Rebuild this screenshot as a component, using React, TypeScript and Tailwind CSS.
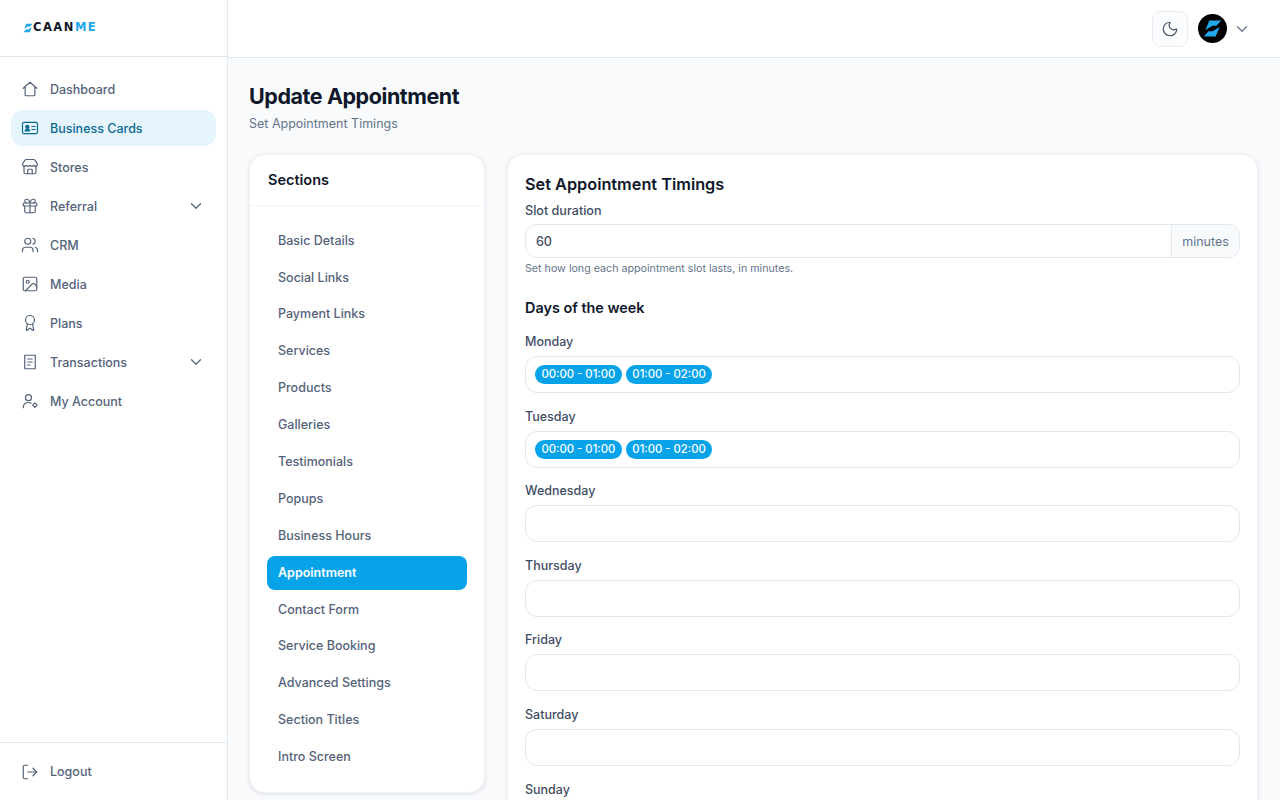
import { ChevronDown, Gift, Image, LogOut, Moon, Store, Users, Award } from 'lucide-react';
import type { ComponentType } from 'react';

type IconProps = { className?: string; strokeWidth?: number };

function HomeIcon({ className, strokeWidth }: IconProps) {
  return (
    <svg viewBox="0 0 24 24" className={className} fill="none" stroke="currentColor" strokeWidth={strokeWidth} strokeLinejoin="round" strokeLinecap="round">
      <path d="M3 11 12 3l9 8M5.5 9v11a1 1 0 0 0 1 1h11a1 1 0 0 0 1-1V9" />
    </svg>
  );
}

function CardIcon({ className, strokeWidth }: IconProps) {
  return (
    <svg viewBox="0 0 24 24" className={className} fill="none" stroke="currentColor" strokeWidth={strokeWidth} strokeLinejoin="round" strokeLinecap="round">
      <rect x="2" y="4.5" width="20" height="15" rx="2" />
      <circle cx="8.5" cy="10.5" r="2" fill="currentColor" />
      <path d="M5.5 16c.5-2 1.500-2.500 3-2.500s2.500.5 3 2.500z" fill="currentColor" />
      <path d="M14.500 10h4.500M14.500 14h4.500" />
    </svg>
  );
}

function ReceiptIcon({ className, strokeWidth }: IconProps) {
  return (
    <svg viewBox="0 0 24 24" className={className} fill="none" stroke="currentColor" strokeWidth={strokeWidth} strokeLinejoin="round" strokeLinecap="round">
      <path d="M5 3h14v18H5z" />
      <path d="M9 8h6M9 12h6M9 16h3" />
    </svg>
  );
}

function AccountIcon({ className, strokeWidth }: IconProps) {
  return (
    <svg viewBox="0 0 24 24" className={className} fill="none" stroke="currentColor" strokeWidth={strokeWidth} strokeLinejoin="round" strokeLinecap="round">
      <circle cx="10" cy="7.500" r="4" />
      <path d="M3 21c0-4.500 3-7 7-7 1.500 0 2.500.3 3.500.8" />
      <path d="M18.500 14.500 21.500 17.500 18.500 20.500 15.500 17.500z" />
    </svg>
  );
}

interface NavItem {
  label: string;
  icon: ComponentType<IconProps>;
  active?: boolean;
  caret?: boolean;
}

const navItems: NavItem[] = [
  { label: 'Dashboard', icon: HomeIcon },
  { label: 'Business Cards', icon: CardIcon, active: true },
  { label: 'Stores', icon: Store },
  { label: 'Referral', icon: Gift, caret: true },
  { label: 'CRM', icon: Users },
  { label: 'Media', icon: Image },
  { label: 'Plans', icon: Award },
  { label: 'Transactions', icon: ReceiptIcon, caret: true },
  { label: 'My Account', icon: AccountIcon },
];

const sections = [
  'Basic Details',
  'Social Links',
  'Payment Links',
  'Services',
  'Products',
  'Galleries',
  'Testimonials',
  'Popups',
  'Business Hours',
  'Appointment',
  'Contact Form',
  'Service Booking',
  'Advanced Settings',
  'Section Titles',
  'Intro Screen',
];

const days = [
  { name: 'Monday', slots: ['00:00 - 01:00', '01:00 - 02:00'] },
  { name: 'Tuesday', slots: ['00:00 - 01:00', '01:00 - 02:00'] },
  { name: 'Wednesday', slots: [] },
  { name: 'Thursday', slots: [] },
  { name: 'Friday', slots: [] },
  { name: 'Saturday', slots: [] },
  { name: 'Sunday', slots: [] },
];

function Bolt({ className }: { className: string }) {
  return (
    <svg viewBox="0 0 24 24" className={className} fill="#22a7e8">
      <path d="M8 2h15l-6 6.500h-5L3 14z" />
      <path d="M21 10 16 22H1l6-6.500h5z" />
    </svg>
  );
}

function Sidebar() {
  return (
    <aside className="flex h-full w-[228px] shrink-0 flex-col border-r border-slate-200 bg-white">
      <div className="flex h-[57px] shrink-0 items-center border-b border-slate-200 pl-[23px]">
        <Bolt className="h-[12px] w-[10px]" />
        <span className="font-['DejaVu_Sans',sans-serif] text-[11.5px] font-bold leading-none tracking-[1.5px] text-[#111827]">CAAN</span>
        <span className="font-['DejaVu_Sans',sans-serif] text-[11.5px] font-bold leading-none tracking-[1.5px] text-[#22a7e8]">ME</span>
      </div>
      <nav className="flex flex-1 flex-col gap-[3px] px-[11px] pt-[14px]">
        {navItems.map((item) => {
          const Icon = item.icon;
          return (
            <div
              key={item.label}
              className={`flex h-9 items-center rounded-xl pl-[10px] pr-[11px] text-[12.5px] font-medium ${
                item.active ? 'bg-[#e6f4fd] text-[#0b6a94]' : 'text-[#55637a]'
              }`}
            >
              <Icon className="mr-[11px] h-[18px] w-[18px]" strokeWidth={1.6} />
              <span className="flex-1 pt-[2px]">{item.label}</span>
              {item.caret && <ChevronDown className="h-[18px] w-[18px]" strokeWidth={1.6} />}
            </div>
          );
        })}
      </nav>
      <div className="flex h-[58px] shrink-0 items-center border-t border-slate-200 pl-[21px] text-[12.5px] font-medium text-[#55637a]">
        <LogOut className="mr-[11px] h-[18px] w-[18px]" strokeWidth={1.6} />
        <span className="pt-px">Logout</span>
      </div>
    </aside>
  );
}

function Header() {
  return (
    <header className="flex h-[58px] shrink-0 items-center justify-end border-b border-slate-200 bg-white pr-[29px]">
      <button className="flex h-[36px] w-[36px] items-center justify-center rounded-lg border border-[#e9edf2] bg-[#fbfcfe] text-[#475569]">
        <Moon className="h-[18px] w-[18px]" strokeWidth={1.6} />
      </button>
      <div className="ml-[10px] flex h-[29px] w-[29px] items-center justify-center rounded-full bg-black">
        <Bolt className="h-[19px] w-[19px]" />
      </div>
      <ChevronDown className="ml-[6px] h-[18px] w-[18px] text-[#64748b]" strokeWidth={1.6} />
    </header>
  );
}

function SectionsCard() {
  return (
    <div className="h-[639px] w-[236px] shrink-0 rounded-2xl border border-slate-100 bg-white shadow-[0_1px_4px_rgba(15,23,42,0.12)]">
      <div className="flex h-[51px] items-center border-b border-slate-100 pl-[18px] text-[14.5px] font-semibold text-[#0f172a]">
        Sections
      </div>
      <div className="flex flex-col gap-[3px] px-[17px] pt-[17.6px]">
        {sections.map((name) => (
          <div
            key={name}
            className={`flex h-[33.9px] items-center rounded-lg px-[11px] pt-px text-[12.5px] ${
              name === 'Appointment' ? 'bg-[#06a3e9] font-semibold text-white' : 'font-medium text-[#55637a]'
            }`}
          >
            {name}
          </div>
        ))}
      </div>
    </div>
  );
}

function DayField({ name, slots }: { name: string; slots: string[] }) {
  return (
    <div className="mb-[13.6px]">
      <div className="mb-[5px] h-[19px] text-[12.5px] font-medium leading-[20px] text-[#3f4d63]">{name}</div>
      <div className="flex h-[37px] items-center gap-1 rounded-xl border border-slate-200 bg-white px-[9px]">
        {slots.map((slot) => (
          <span key={slot} className="flex h-[19px] items-center rounded-full bg-[#06a3e9] px-[6.5px] text-[11.3px] font-medium text-white">
            {slot}
          </span>
        ))}
      </div>
    </div>
  );
}

function TimingsCard() {
  return (
    <div className="h-[760px] flex-1 rounded-2xl border border-slate-100 bg-white px-[17px] pt-[19px] shadow-[0_1px_4px_rgba(15,23,42,0.12)]">
      <h2 className="h-[20px] text-[16.3px] font-semibold leading-[20px] text-[#0f172a]">Set Appointment Timings</h2>
      <div className="mt-[8px] h-[18px] text-[12.6px] font-medium leading-[18px] text-[#3f4d63]">Slot duration</div>
      <div className="mt-[4px] flex h-[34px] rounded-xl border border-slate-200 text-[12.5px]">
        <div className="flex flex-1 items-center pl-[10px] pt-[2px] font-medium text-[#3f4d63]">60</div>
        <div className="flex w-[68px] items-center justify-center rounded-r-xl border-l border-slate-200 bg-slate-50 pt-[2px] font-normal text-[#64748b]">minutes</div>
      </div>
      <p className="mt-[4px] h-[14px] text-[10.7px] leading-[14px] text-[#64748b]">Set how long each appointment slot lasts, in minutes.</p>
      <h3 className="mt-[22px] h-[20px] text-[14.4px] font-semibold leading-[20px] text-[#0f172a]">Days of the week</h3>
      <div className="mt-[14px]">
        {days.map((day) => (
          <DayField key={day.name} name={day.name} slots={day.slots} />
        ))}
      </div>
    </div>
  );
}

export default function App() {
  return (
    <div className="flex h-screen overflow-hidden bg-[#f8fafc] font-['Inter',sans-serif]">
      <Sidebar />
      <div className="flex min-w-0 flex-1 flex-col">
        <Header />
        <main className="min-h-0 flex-1 overflow-hidden pl-[21px] pr-[22px] pt-[23px]">
          <h1 className="h-[31px] text-[21.5px] font-bold leading-[31px] tracking-[-0.02em] text-[#0f172a]">Update Appointment</h1>
          <p className="mt-[2px] h-[20px] text-[12.5px] leading-[20px] text-[#64748b]">Set Appointment Timings</p>
          <div className="mt-[20px] flex items-start gap-[22px]">
            <SectionsCard />
            <TimingsCard />
          </div>
        </main>
      </div>
    </div>
  );
}
